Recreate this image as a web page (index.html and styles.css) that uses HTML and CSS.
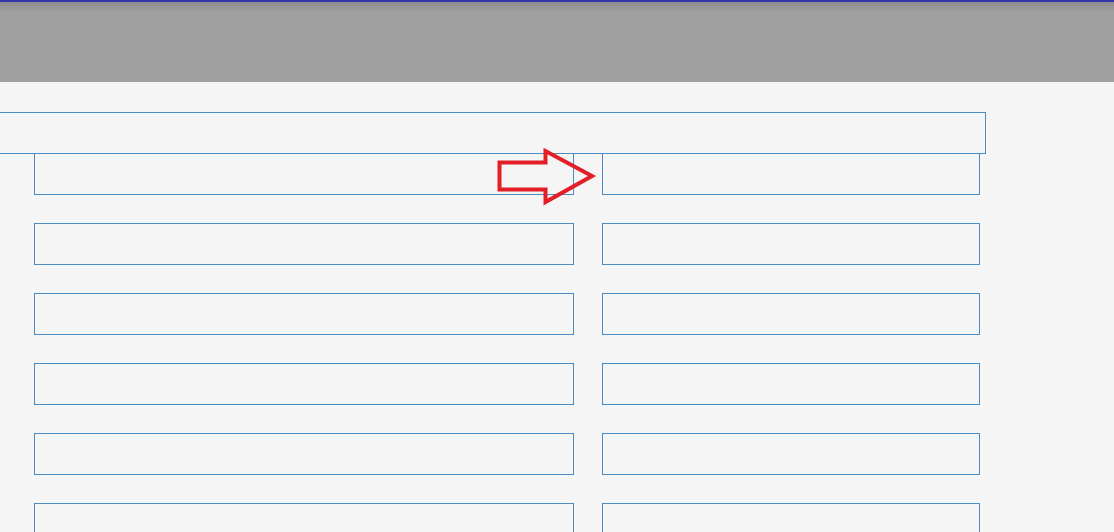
FILE: index.html
```html
<!DOCTYPE html>
<html>
<head>
<meta charset="utf-8">
<link rel="stylesheet" href="styles.css">
</head>
<body>
<header class="topbar"></header>
<main class="content">
  <div class="wide-field"></div>
  <div class="grid">
    <div class="field left"></div><div class="field right"></div>
    <div class="field left"></div><div class="field right"></div>
    <div class="field left"></div><div class="field right"></div>
    <div class="field left"></div><div class="field right"></div>
    <div class="field left"></div><div class="field right"></div>
    <div class="field left"></div><div class="field right"></div>
  </div>
  <svg class="arrow" width="110" height="64" viewBox="490 144 110 64">
    <polygon points="499.5,162.5 545.5,162.5 545.5,151 592,176 545.5,202 545.5,189.5 499.5,189.5" fill="none" stroke="#e31e26" stroke-width="4" stroke-linejoin="miter"/>
  </svg>
</main>
</body>
</html>
```
FILE: styles.css
```css
html, body {
  margin: 0;
  padding: 0;
  background: #f5f5f5;
  overflow: hidden;
  height: 532px;
  font-family: "Liberation Sans", Arial, sans-serif;
}
.topbar {
  height: 80px;
  border-top: 2px solid #3434a8;
  background: linear-gradient(to bottom, #8c8c8c 0px, #a0a0a0 10px, #a0a0a0 100%);
}
.content {
  position: relative;
  padding-top: 30px;
}
.wide-field {
  margin-left: -2px;
  width: 986px;
  height: 40px;
  border: 1px solid #4a8cc4;
}
.grid {
  display: grid;
  grid-template-columns: 540px 378px;
  column-gap: 28px;
  row-gap: 28px;
  padding-left: 34px;
  margin-top: -1px;
}
.field {
  height: 40px;
  border: 1px solid #4a8cc4;
  box-sizing: content-box;
}
.left { width: 538px; }
.right { width: 376px; }
.arrow {
  position: absolute;
  left: 490px;
  top: 62px;
}
```
